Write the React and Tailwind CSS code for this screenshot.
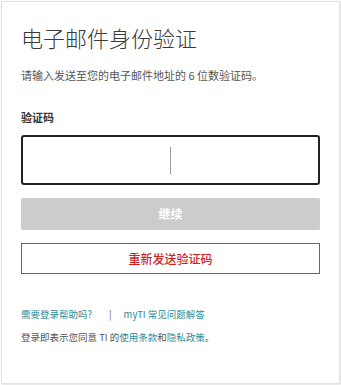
export default function App() {
  return (
    <div className="h-[385px] w-[341px] bg-white pl-[1px] pt-[1px] font-['Noto_Sans_CJK_SC','Noto_Sans',sans-serif]">
      <div className="flex h-[383px] w-[339px] flex-col border border-[#e2e2e2] bg-white px-[19px] shadow-[1px_1px_2px_rgba(0,0,0,0.12)]">
        <h1 className="mt-[22px] text-[22px] font-light leading-[26px] text-[#3a3a3a]">电子邮件身份验证</h1>
        <p className="mt-[17px] text-[11px] leading-[16px] text-[#555]">请输入发送至您的电子邮件地址的 6 位数验证码。</p>
        <label className="mt-[26px] text-[11px] font-bold leading-[16px] text-[#333]">验证码</label>
        <div className="mt-[10px] flex h-[50px] items-center justify-center rounded-[3px] border-2 border-[#222]">
          <span className="h-[27px] w-[1px] bg-[#999]" />
        </div>
        <button className="mt-[13px] h-[32px] rounded-[2px] bg-[#cccccc] text-[12px] font-bold text-white">继续</button>
        <button className="mt-[13px] h-[31px] border border-[#e03434] text-[12px] font-medium text-[#d41f1f]">重新发送验证码</button>
        <div className="mt-[33px] flex items-center text-[9.5px] leading-[14px] text-[#2a8a96]">
          <span>需要登录帮助吗?</span>
          <span className="ml-[17px] text-[#666]">|</span>
          <span className="ml-[12px]">myTI 常见问题解答</span>
        </div>
        <p className="mt-[9px] text-[9.5px] leading-[14px] text-[#555]">
          登录即表示您同意 TI 的<span className="text-[#2a8a96]">使用条款</span>和<span className="text-[#2a8a96]">隐私政策</span>。
        </p>
      </div>
    </div>
  );
}
